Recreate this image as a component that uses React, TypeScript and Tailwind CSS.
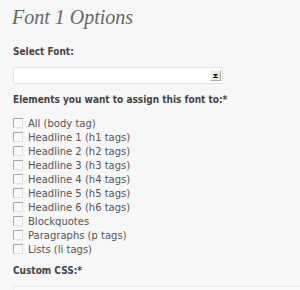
const items = [
  "All (body tag)",
  "Headline 1 (h1 tags)",
  "Headline 2 (h2 tags)",
  "Headline 3 (h3 tags)",
  "Headline 4 (h4 tags)",
  "Headline 5 (h5 tags)",
  "Headline 6 (h6 tags)",
  "Blockquotes",
  "Paragraphs (p tags)",
  "Lists (li tags)",
];

const labelCls =
  "text-[10px] leading-[12px] font-bold text-[#444] font-['DejaVu_Sans_Condensed','DejaVu_Sans',sans-serif]";

export default function App() {
  return (
    <div className="w-[300px] h-[290px] overflow-hidden bg-[#f7f7f7] pl-[13px] pt-[5px] font-['DejaVu_Sans',Verdana,sans-serif] text-[#555]">
      <h2 className="font-['Liberation_Serif',Georgia,serif] italic text-[20px] leading-[24px] text-[#666] -ml-px">
        Font 1 Options
      </h2>

      <div className={`mt-[17px] ${labelCls}`}>Select Font:</div>

      <div className="mt-[9px] w-[210px] h-[17px] bg-white border border-[#e2e2e2] rounded-[2px] flex items-center justify-end pr-[1px]">
        <div className="w-[11px] h-[11px] bg-[#ecebe1] border-t border-l border-t-[#f8f8f4] border-l-[#f8f8f4] border-b border-r border-b-[#a8a8a0] border-r-[#a8a8a0] flex items-center justify-center">
          <svg width="5" height="4" viewBox="0 0 5 4">
            <path d="M0 0h5L2.5 3z" fill="#111" />
            <rect x="0" y="3" width="5" height="1" fill="#111" />
          </svg>
        </div>
      </div>

      <div className={`mt-[10px] ${labelCls}`}>Elements you want to assign this font to:*</div>

      <div className="mt-[10px] flex flex-col">
        {items.map((label) => (
          <label key={label} className="flex items-center h-[14px] text-[10px]">
            <span className="w-[10px] h-[10px] border border-t-[#a8a8a8] border-l-[#a8a8a8] border-b-[#e0e0e0] border-r-[#e0e0e0] bg-[#fbfbfb] mr-[5px]" />
            {label}
          </label>
        ))}
      </div>

      <div className={`mt-[9px] ${labelCls}`}>Custom CSS:*</div>

      <div className="mt-[9px] w-[300px] h-[40px] bg-[#fafafa] border border-[#e8e8e8] rounded-[2px]" />
    </div>
  );
}
